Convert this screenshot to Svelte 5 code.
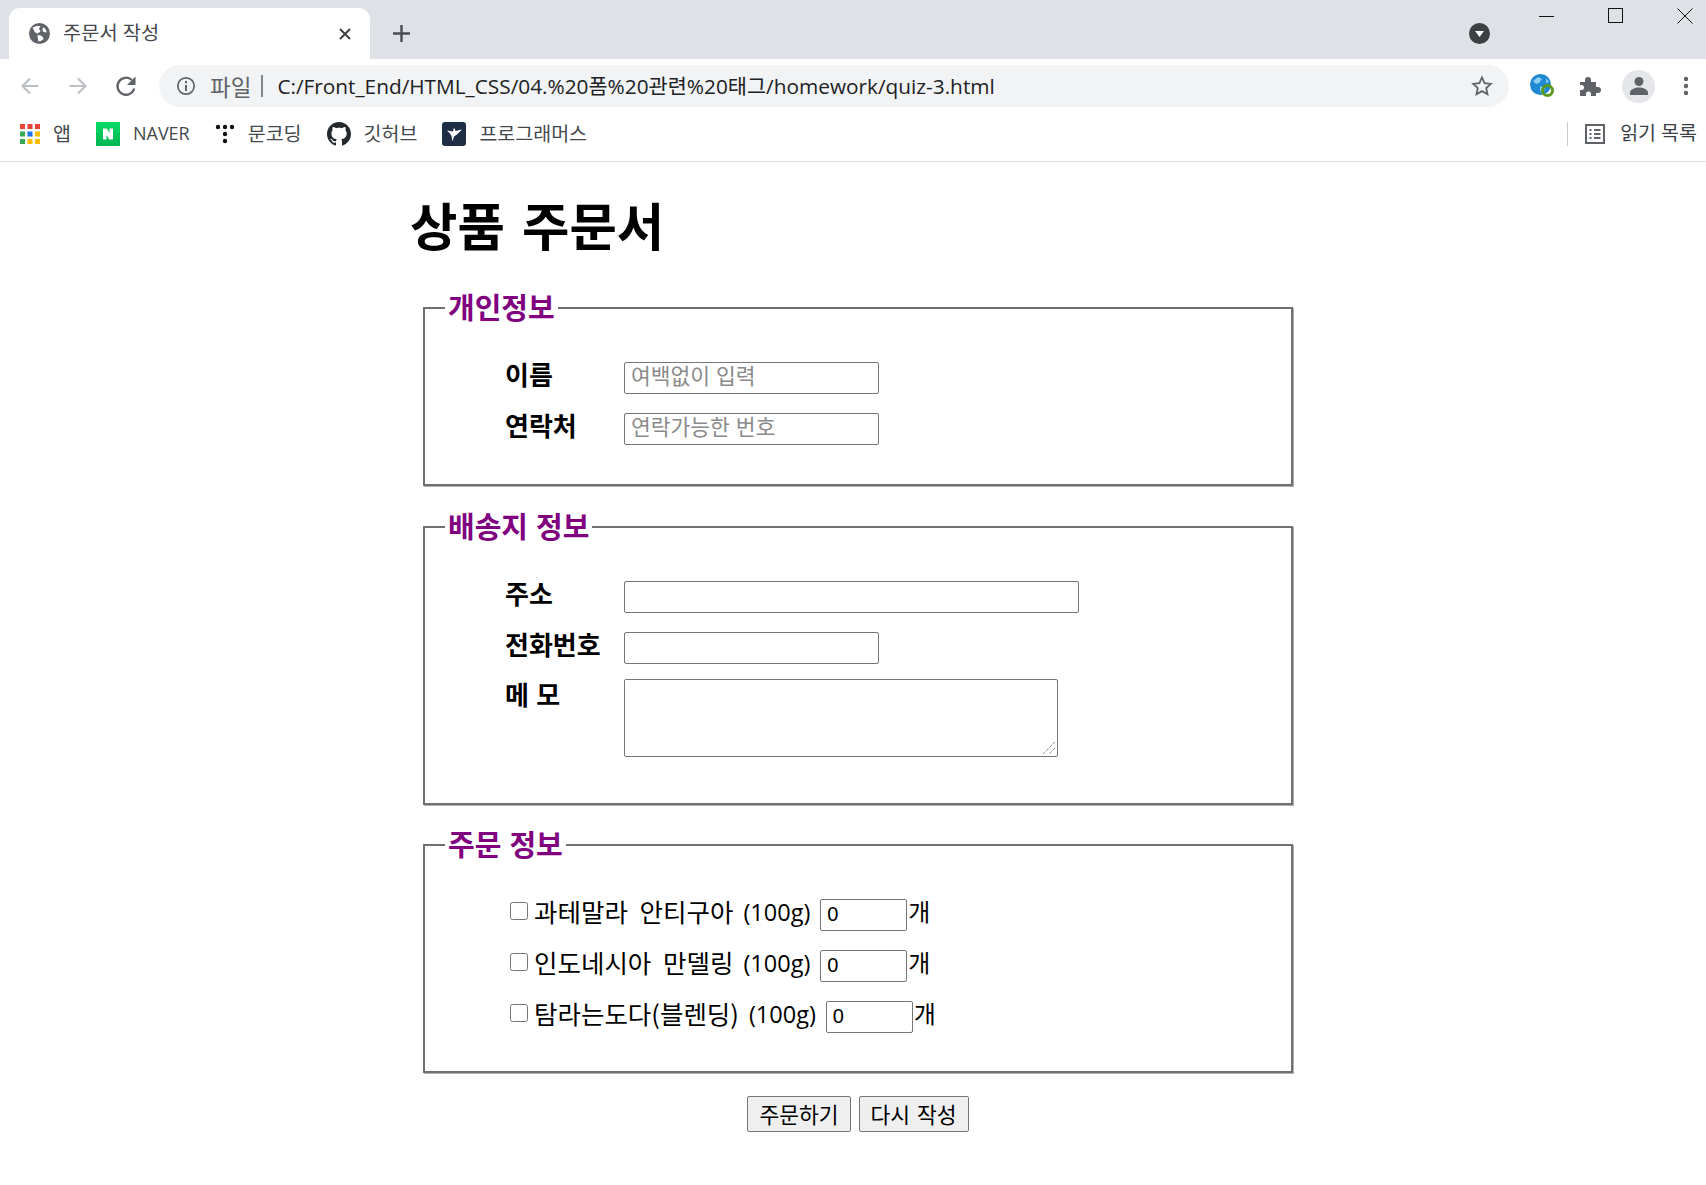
<script>
  const bookmarks = [
    { id: "apps", name: "앱" },
    { id: "naver", name: "NAVER" },
    { id: "dots", name: "문코딩" },
    { id: "github", name: "깃허브" },
    { id: "prog", name: "프로그래머스" }
  ];
  const products = [
    { name: "과테말라 안티구아", size: "(100g)" },
    { name: "인도네시아 만델링", size: "(100g)" },
    { name: "탐라는도다(블렌딩)", size: "(100g)" }
  ];
</script>

<div class="chrome">
  <div class="tabstrip">
    <div class="tab">
      <svg class="globe" width="21" height="21" viewBox="0 0 20 20">
        <circle cx="10" cy="10" r="10" fill="#5f6368" />
        <path d="M3.500 4.500C6 2.500 9 2.500 11 3.200L9.500 5.500 11 8l-3 2.200L5.500 8.500zM8 12c1.500-.5 3-.5 4.500.5l1.500 2.500c-1.500 1.800-3.500 2.500-5 2.500L8.500 15zM14 4c1.500 1 2.500 3 2.800 5l-3-.5L12.500 6z" fill="#fff" />
      </svg>
      <span class="tabtitle">주문서 작성</span>
      <svg class="tabclose" width="12" height="12" viewBox="0 0 12 12">
        <path d="M1 1l10 10M11 1L1 11" stroke="#3c4043" stroke-width="2" />
      </svg>
    </div>
    <svg class="newtab" width="17" height="17" viewBox="0 0 17 17">
      <path d="M8.500 0v17M0 8.500h17" stroke="#494c50" stroke-width="2.400" />
    </svg>
    <div class="spacer"></div>
    <svg class="tabsearch" width="21" height="21" viewBox="0 0 21 21">
      <circle cx="10.500" cy="10.500" r="10.500" fill="#3c4043" />
      <path d="M6 8h9l-4.500 6z" fill="#fff" />
    </svg>
    <div class="winctl">
      <svg width="16" height="16" viewBox="0 0 16 16"><path d="M0 8.500h15" stroke="#111" /></svg>
      <svg width="16" height="16" viewBox="0 0 16 16"><rect x="0.500" y="0.500" width="14" height="14" fill="none" stroke="#111" /></svg>
      <svg width="16" height="16" viewBox="0 0 16 16"><path d="M0.500 0.500l15 15M15.500 0.500l-15 15" stroke="#111" /></svg>
    </div>
  </div>

  <div class="toolbar">
    <svg class="nav" width="20" height="20" viewBox="0 0 20 20">
      <path d="M18.500 10H3M10 2.500L2.500 10l7.500 7.500" fill="none" stroke="#bdc1c6" stroke-width="2.200" />
    </svg>
    <svg class="nav" width="20" height="20" viewBox="0 0 20 20">
      <path d="M1.500 10H17M10 2.500l7.500 7.500-7.500 7.500" fill="none" stroke="#bdc1c6" stroke-width="2.200" />
    </svg>
    <svg class="nav" width="22" height="22" viewBox="0 0 22 22">
      <path d="M19.200 13.500A8.500 8.500 0 1 1 16.800 5" fill="none" stroke="#5f6368" stroke-width="2.300" />
      <path d="M20.500 1.500v8.500H12z" fill="#5f6368" />
    </svg>
    <div class="omnibox">
      <svg width="20" height="20" viewBox="0 0 20 20">
        <circle cx="10" cy="10" r="8.200" fill="none" stroke="#5f6368" stroke-width="1.700" />
        <path d="M10 9v6M10 5v2.200" stroke="#5f6368" stroke-width="2" />
      </svg>
      <span class="scheme">파일</span>
      <span class="sep"></span>
      <span class="url">C:/Front_End/HTML_CSS/04.%20폼%20관련%20태그/homework/quiz-3.html</span>
      <svg class="star" width="22" height="22" viewBox="0 0 22 22">
        <path d="M11 2.500l2.600 5.700 6.200.7-4.600 4.200 1.300 6.100L11 16.100l-5.500 3.100 1.300-6.100L2.200 8.900l6.200-.7z" fill="none" stroke="#5f6368" stroke-width="1.800" />
      </svg>
    </div>
    <div class="tools">
      <svg width="26" height="26" viewBox="0 0 26 26">
        <circle cx="11.500" cy="11.500" r="10.500" fill="#1e88d2" />
        <path d="M4 8l5-4 4 2-3 4-3 1zM11 13l5 2-2 6-3-3zM17 5l3 4-3 1z" fill="#8fd0f2" />
        <circle cx="18.500" cy="17.500" r="5" fill="none" stroke="#5c9a1e" stroke-width="3" />
      </svg>
      <svg width="22" height="22" viewBox="0 0 22 22">
        <path d="M1 7h5V5a3 3 0 0 1 6 0v2h5v5h2a3 3 0 0 1 0 6h-2v3h-5v-2a2.500 2.500 0 0 0-5 0v2H1v-6h1.500a2.500 2.500 0 0 0 0-5H1z" fill="#5f6368" />
      </svg>
      <div class="avatar">
        <svg width="20" height="20" viewBox="0 0 20 20">
          <circle cx="10" cy="5.500" r="4.500" fill="#5f6368" />
          <path d="M1 19v-2.500c0-3 5-5 9-5s9 2 9 5V19z" fill="#5f6368" />
        </svg>
      </div>
      <svg width="6" height="20" viewBox="0 0 6 20">
        <circle cx="3" cy="3" r="2.200" fill="#5f6368" />
        <circle cx="3" cy="10" r="2.200" fill="#5f6368" />
        <circle cx="3" cy="17" r="2.200" fill="#5f6368" />
      </svg>
    </div>
  </div>

  <div class="bookmarks">
    {#each bookmarks as b}
      <div class="bm">
        {#if b.id === "apps"}
          <svg width="20" height="20" viewBox="0 0 20 20">
            <g fill="#ea4335"><rect width="5" height="5" /><rect x="7.500" width="5" height="5" /><rect x="15" width="5" height="5" /></g>
            <g><rect y="7.500" width="5" height="5" fill="#34a853" /><rect x="7.500" y="7.500" width="5" height="5" fill="#1a73e8" /><rect x="15" y="7.500" width="5" height="5" fill="#fbbc04" /></g>
            <g><rect y="15" width="5" height="5" fill="#34a853" /><rect x="7.500" y="15" width="5" height="5" fill="#fbbc04" /><rect x="15" y="15" width="5" height="5" fill="#fbbc04" /></g>
          </svg>
        {:else if b.id === "naver"}
          <svg width="24" height="24" viewBox="0 0 24 24">
            <defs>
              <linearGradient id="nv" x1="0" y1="0" x2="0" y2="1">
                <stop offset="0" stop-color="#05dc66" />
                <stop offset="1" stop-color="#03b552" />
              </linearGradient>
            </defs>
            <rect width="24" height="24" fill="url(#nv)" />
            <path d="M7 6.500h3.700l2.800 4.500V6.500H17v11h-3.700L10.500 13v4.500H7z" fill="#fff" />
          </svg>
        {:else if b.id === "dots"}
          <svg width="20" height="20" viewBox="0 0 20 20">
            <g fill="#111"><circle cx="3" cy="3" r="2.200" /><circle cx="10" cy="3" r="2.200" /><circle cx="17" cy="3" r="2.200" /><circle cx="10" cy="10" r="2.200" /><circle cx="10" cy="17" r="2.200" /></g>
          </svg>
        {:else if b.id === "github"}
          <svg width="24" height="24" viewBox="0 0 16 16">
            <path fill="#24292e" d="M8 0C3.580 0 0 3.580 0 8c0 3.540 2.290 6.530 5.470 7.590.4.070.55-.17.55-.38 0-.19-.01-.82-.01-1.490-2.010.37-2.530-.49-2.690-.94-.09-.23-.48-.94-.82-1.130-.28-.15-.68-.52-.01-.53.63-.01 1.080.58 1.230.82.720 1.210 1.870.87 2.330.66.070-.52.280-.87.510-1.070-1.780-.2-3.640-.89-3.640-3.950 0-.87.310-1.590.820-2.150-.08-.2-.36-1.020.08-2.120 0 0 .67-.21 2.200.820.640-.18 1.320-.27 2-.27s1.360.09 2 .27c1.530-1.040 2.200-.82 2.200-.82.440 1.100.16 1.920.08 2.120.51.560.82 1.270.82 2.150 0 3.070-1.870 3.750-3.650 3.950.29.250.54.730.54 1.480 0 1.070-.01 1.930-.01 2.200 0 .21.150.46.550.38A8.010 8.010 0 0 0 16 8c0-4.420-3.580-8-8-8z" />
          </svg>
        {:else}
          <svg width="24" height="24" viewBox="0 0 24 24">
            <rect width="24" height="24" rx="3" fill="#1f2d45" />
            <path d="M5 8.500l6 1 1-4 1.500 3.500 6.500-1.500-5 5-3 2-1.500 5-1-5.500-1.500-2.500z" fill="#fff" />
          </svg>
        {/if}
        <span class:latin={b.id === "naver"}>{b.name}</span>
      </div>
    {/each}
    <div class="spacer"></div>
    <span class="bmsep"></span>
    <svg class="readicon" width="20" height="20" viewBox="0 0 20 20">
      <rect x="1" y="1" width="18" height="18" fill="none" stroke="#5f6368" stroke-width="2" />
      <path d="M4.500 6h2M9 6h6.500M4.500 10h2M9 10h6.500M4.500 14h2M9 14h6.500" stroke="#5f6368" stroke-width="1.800" />
    </svg>
    <span class="readlist">읽기 목록</span>
  </div>
</div>

<main>
  <h1>상품 주문서</h1>
  <form>
    <fieldset>
      <legend>개인정보</legend>
      <div class="rows one">
        <div class="row"><label for="name">이름</label><input id="name" class="short" placeholder="여백없이 입력" /></div>
        <div class="row"><label for="tel">연락처</label><input id="tel" class="short" placeholder="연락가능한 번호" /></div>
      </div>
    </fieldset>
    <fieldset>
      <legend>배송지 정보</legend>
      <div class="rows two">
        <div class="row"><label for="addr">주소</label><input id="addr" class="long" /></div>
        <div class="row"><label for="phone">전화번호</label><input id="phone" class="short" /></div>
        <div class="row memo">
          <label for="memo">메 모</label>
          <div class="memobox">
            <textarea id="memo"></textarea>
            <svg class="grip" width="14" height="14" viewBox="0 0 14 14">
              <path d="M13 1L1 13M13 7l-6 6" stroke="#555" stroke-dasharray="1 1" fill="none" />
            </svg>
          </div>
        </div>
      </div>
    </fieldset>
    <fieldset>
      <legend>주문 정보</legend>
      <div class="orders">
        {#each products as p}
          <div class="order">
            <input type="checkbox" />
            <span class="pname">{p.name}</span>
            <span class="psize">{p.size}</span>
            <input class="qty" type="text" value="0" />
            <span class="unit">개</span>
          </div>
        {/each}
      </div>
    </fieldset>
    <div class="buttons">
      <button type="submit">주문하기</button>
      <button type="reset">다시 작성</button>
    </div>
  </form>
</main>

<style>
  :global(body) {
    margin: 0;
    background: #fff;
    font-family: "Liberation Sans", "Noto Sans CJK KR", sans-serif;
  }
  svg {
    display: block;
    flex: none;
  }
  .spacer {
    flex: 1;
  }
  .chrome {
    font-family: "Open Sans", "Noto Sans CJK KR", sans-serif;
    border-bottom: 1px solid #dadce0;
  }
  .tabstrip {
    height: 59px;
    background: #dee1e6;
    display: flex;
    align-items: center;
  }
  .tab {
    width: 361px;
    height: 51px;
    margin: 8px 0 0 9px;
    background: #fff;
    border-radius: 11px 11px 0 0;
    display: flex;
    align-items: center;
    padding: 0 19px 0 20px;
    box-sizing: border-box;
  }
  .tabtitle {
    margin-left: 13px;
    font-size: 19.800px;
    color: #45484c;
    flex: 1;
    position: relative;
    top: -2px;
  }
  .newtab {
    margin: 7px 0 0 23px;
  }
  .tabsearch {
    margin: 7px 0 0 0;
  }
  .winctl {
    display: flex;
    gap: 53px;
    margin: -28px 13px 0 49px;
  }
  .toolbar {
    height: 54px;
    display: flex;
    align-items: center;
    padding-left: 20px;
  }
  .nav {
    margin-right: 28px;
  }
  .nav:nth-of-type(3) {
    margin-right: 22px;
    margin-left: -1px;
  }
  .omnibox {
    width: 1350px;
    height: 42px;
    box-sizing: border-box;
    background: #f1f3f4;
    border-radius: 21px;
    display: flex;
    align-items: center;
    padding: 0 16px 0 17px;
  }
  .scheme {
    margin-left: 14px;
    font-size: 22.500px;
    color: #5f6368;
  }
  .sep {
    width: 2px;
    height: 22px;
    background: #80868b;
    margin: 0 14px 0 10px;
  }
  .url {
    flex: 1;
    font-size: 20.800px;
    color: #202124;
    position: relative;
    top: -1px;
  }
  .tools {
    display: flex;
    align-items: center;
    margin-left: 20px;
  }
  .tools svg:nth-child(2) {
    margin-left: 24px;
  }
  .avatar {
    width: 33px;
    height: 33px;
    border-radius: 50%;
    background: #e4e6ea;
    display: flex;
    align-items: center;
    justify-content: center;
    margin-left: 21px;
  }
  .tools > svg:last-child {
    margin-left: 28px;
  }
  .bookmarks {
    height: 48px;
    display: flex;
    align-items: center;
    padding: 0 9px 7px 20px;
    box-sizing: border-box;
    font-size: 19.500px;
    color: #45484c;
  }
  .bm {
    display: flex;
    align-items: center;
    gap: 13px;
    margin-right: 25px;
  }
  .bm span {
    position: relative;
    top: -1px;
  }
  .bm .latin {
    font-size: 18px;
  }
  .bmsep {
    width: 1px;
    height: 24px;
    background: #c8cacd;
    margin-right: 17px;
  }
  .readlist {
    margin-left: 15px;
    position: relative;
    top: -2px;
    color: #3c4043;
  }

  main {
    padding-left: 410px;
    width: 883px;
  }
  h1 {
    margin: 0;
    padding-top: 27px;
    font-size: 51.500px;
    line-height: 78px;
    font-weight: 700;
    color: #000;
    word-spacing: 3px;
  }
  form {
    margin: 24px 0 0 13px;
    display: flex;
    flex-direction: column;
  }
  fieldset {
    margin: 0 0 24px;
    padding: 0;
    border: 2px solid #707070;
    box-shadow: 1px 1px 0 #b0b0b0;
    min-width: 0;
  }
  fieldset:nth-of-type(2) {
    margin-bottom: 23px;
  }
  legend {
    margin-left: 20px;
    padding: 3px 3px 0;
    font-size: 29px;
    line-height: 30px;
    font-weight: 700;
    color: #800080;
  }
  .rows {
    display: flex;
    flex-direction: column;
    gap: 19px;
    padding-left: 80px;
  }
  .rows.one {
    padding-top: 38px;
    padding-bottom: 39px;
  }
  .rows.two {
    padding-top: 38px;
    padding-bottom: 46px;
  }
  .row {
    display: flex;
    align-items: flex-start;
  }
  .row.memo {
    margin-top: -4px;
  }
  .row.memo label {
    margin-top: 3px;
  }
  .memobox {
    position: relative;
  }
  .grip {
    position: absolute;
    right: 2px;
    bottom: 2px;
  }
  label {
    width: 119px;
    font-size: 26px;
    line-height: 28px;
    font-weight: 700;
    color: #000;
  }
  input:not([type="checkbox"]),
  textarea {
    box-sizing: border-box;
    border: 1px solid #767676;
    border-radius: 2px;
    background: #fff;
    font-family: inherit;
    margin: 0;
  }
  input:not([type="checkbox"]) {
    height: 32px;
    font-size: 20px;
    padding: 0 6px 2px;
  }
  input::placeholder {
    color: #8a8a8a;
    font-size: 21.500px;
  }
  .short {
    width: 255px;
  }
  .long {
    width: 455px;
  }
  textarea {
    width: 434px;
    height: 78px;
    display: block;
    resize: none;
  }
  .orders {
    display: flex;
    flex-direction: column;
    gap: 19px;
    padding: 38px 0 38px 85px;
  }
  .order {
    display: flex;
    align-items: center;
    height: 32px;
    color: #000;
  }
  .order input[type="checkbox"] {
    width: 18px;
    height: 18px;
    margin: 0 6px 8px 0;
    flex: none;
  }
  .pname {
    position: relative;
    top: -5px;
    font-family: "Noto Sans CJK KR", sans-serif;
    font-size: 25.500px;
    word-spacing: 6px;
  }
  .psize {
    margin-left: 10px;
    position: relative;
    top: -3px;
    font-family: "Open Sans", sans-serif;
    font-size: 23.500px;
  }
  .order .qty {
    width: 87px;
    margin-left: 10px;
  }
  .unit {
    margin-left: 1px;
    position: relative;
    top: -5px;
    font-size: 24px;
    font-family: "Noto Sans CJK KR", sans-serif;
  }
  .buttons {
    display: flex;
    justify-content: center;
    gap: 8px;
    margin-top: -1px;
  }
  button {
    height: 36px;
    padding: 0 11px;
    border: 1px solid #767676;
    border-radius: 2px;
    background: #efefef;
    font-family: "Noto Sans CJK KR", sans-serif;
    font-size: 21.500px;
    line-height: 1;
    color: #000;
    word-spacing: 2px;
  }
</style>
